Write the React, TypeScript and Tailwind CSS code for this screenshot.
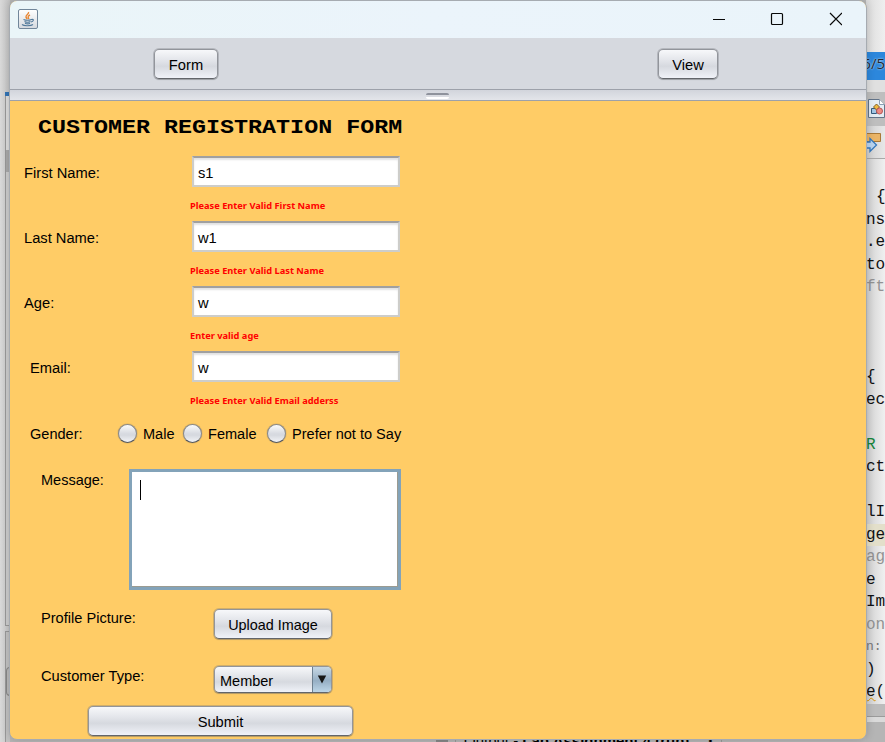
import type { ReactNode } from "react";

const codeLines = [
  { text: "{", pad: "pl-[10px]" },
  { text: "ns" },
  { text: ".e" },
  { text: "to" },
  { text: "ft", color: "text-[#929292]" },
  { text: "" },
  { text: "" },
  { text: "" },
  { text: "{" },
  { text: "ec" },
  { text: "" },
  { text: "R", color: "text-[#16853b]" },
  { text: "ct" },
  { text: "" },
  { text: "lI" },
  { text: "ge", bg: "bg-[#e3dfca]" },
  { text: "ag", color: "text-[#929292]" },
  { text: "e" },
  { text: "Im" },
  { text: "on", color: "text-[#929292]" },
  { text: "n:", color: "text-[#777777]", size: "text-[13px]" },
  { text: ")" },
  { text: "e(", warn: true },
];

function Editor() {
  return (
    <div className="flex h-[742px] w-[19px] shrink-0 flex-col overflow-hidden bg-gradient-to-r from-[#cfcfcf] to-[#f0f0f0]">
      <div className="h-[52px] shrink-0 bg-gradient-to-r from-[#dcdcdc] to-[#efefef]" />
      <div className="flex h-7 shrink-0 items-start justify-end bg-[#2c87dc] font-['Open_Sans',sans-serif] text-[15px] leading-[22px] text-[#202832] [text-shadow:0_0_2px_white]">
        6/5
      </div>
      <div className="h-3 shrink-0 bg-[#e0e0e0]" />
      <div className="h-[34px] shrink-0 bg-[#bebebe] pl-[2px] pt-[7px]">
        <svg width="17" height="19" viewBox="0 0 17 19">
          <path d="M.5.5h11l5 5v13H.5z" fill="#e5edf4" stroke="#637489" />
          <path d="M11.5.5v5h5" fill="#fff" stroke="#8ba0b5" />
          <path d="M3.500 9.500h5v5h-5z" fill="#a4c7e5" stroke="#315b7d" />
          <path d="m8.500 5 3 3-3 3-3-3z" fill="#efb93f" stroke="#80602a" />
          <circle cx="11.500" cy="12" r="3" fill="#ee8b83" stroke="#b95656" />
        </svg>
      </div>
      <div className="h-[33px] shrink-0 border-b border-[#a9a9a9] bg-gradient-to-r from-[#cecece] to-[#e8e8e8] pt-[6px]">
        <svg width="19" height="22" viewBox="0 0 19 22">
          <path d="M0 1.500h14.500v8H0z" fill="#eab466" stroke="#a97937" />
          <path d="M0 10h4V6.500l6.500 6.500-6.500 6.500V16H0z" fill="#b9d4f0" stroke="#3478bd" strokeWidth="1.300" />
        </svg>
      </div>
      <div className="h-[27px] shrink-0" />
      {codeLines.map((l, i) => (
        <div
          key={i}
          className={`h-[22.5px] shrink-0 whitespace-pre font-['Liberation_Mono',monospace] leading-[22.5px] ${l.size ?? "text-[16px]"} ${l.pad ?? ""} ${l.color ?? "text-[#111]"} ${l.bg ?? ""}`}
        >
          {l.warn ? (
            <>
              <span className="underline decoration-[#d99000] decoration-wavy decoration-1">e</span>(
            </>
          ) : (
            l.text
          )}
        </div>
      ))}
      <div className="h-[13px] shrink-0 border-b border-[#9b9b9b] bg-[#bcbcbc]" />
      <div className="h-[5px] shrink-0 bg-[#dadada]" />
      <div className="grow bg-[#b5b5b5]" />
    </div>
  );
}

function LeftPanels() {
  return (
    <div className="flex h-[742px] w-[10px] shrink-0 flex-col bg-gradient-to-r from-[#d9d9d9] to-[#c4c4c4] pl-[5px]">
      <div className="h-[92px] shrink-0" />
      <div className="h-1 shrink-0 bg-[#3374b5]" />
      <div className="h-[54px] shrink-0 border-l border-[#999] bg-[#dedede]" />
      <div className="h-[22px] shrink-0 border-l border-[#999] bg-[#aaa]" />
      <div className="h-[454px] shrink-0 border-b border-l border-[#999] bg-[#cecece]" />
      <div className="h-[5px] shrink-0" />
      <div className="grow border-l border-t border-[#999] bg-[#c3c3c3] pt-[35px]">
        <div className="h-[29px] rounded-l border border-[#888] bg-[#bbb]" />
      </div>
    </div>
  );
}

function Button({ children, className }: { children: ReactNode; className: string }) {
  return (
    <button
      className={`rounded-[5px] border border-[#92959b] border-b-[#62656a] bg-[linear-gradient(#f7f8fa_0%,#e4e6eb_35%,#d6d9df_58%,#f0f2f8_100%)] pt-px text-center shadow-[0_0_0_1px_rgba(105,108,116,0.3),0_1px_1px_0_rgba(80,80,80,0.25)] ${className}`}
    >
      {children}
    </button>
  );
}

function Radio({ label, className }: { label: string; className: string }) {
  return (
    <label className={`flex shrink-0 items-center gap-[6px] whitespace-nowrap ${className}`}>
      <span className="mb-px h-[19px] w-[19px] shrink-0 rounded-full border border-[#85888e] border-b-[#505660] bg-[linear-gradient(#fafbfc,#d8dbe1_50%,#d6d9df_60%,#f1f3f7)] shadow-[0_0_1px_#555]" />
      <span>{label}</span>
    </label>
  );
}

const fields = [
  { label: "First Name:", value: "s1", error: "Please Enter Valid First Name", pad: "pl-[14px]" },
  { label: "Last Name:", value: "w1", error: "Please Enter Valid Last Name", pad: "pl-[14px]" },
  { label: "Age:", value: "w", error: "Enter valid age", pad: "pl-[14px]" },
  { label: "Email:", value: "w", error: "Please Enter Valid Email adderss", pad: "pl-5" },
];

function Form() {
  return (
    <div className="flex h-[639px] w-[392px] flex-col">
      <h1 className="h-[55px] origin-left scale-x-[1.167] whitespace-pre pl-[24px] pt-[14px] font-['Liberation_Mono',monospace] text-[20px] font-bold leading-[26px]">
        CUSTOMER REGISTRATION FORM
      </h1>
      {fields.map((f) => (
        <div key={f.label} className="h-[65px]">
          <div className="flex h-[31px] items-center">
            <div className={`w-[182px] pt-[2px] ${f.pad}`}>{f.label}</div>
            <div className="flex h-[31px] w-[208px] items-center border-2 border-[#cdcdca] border-t-[#a0a0a0] bg-white pl-1 pt-[2px] shadow-[inset_0_2px_2px_#e2e2e2]">
              {f.value}
            </div>
          </div>
          <div className="pl-[180px] pt-3 font-['Noto_Sans',sans-serif] text-[9.25px] font-bold leading-[14px] text-[#ff0000]">
            {f.error}
          </div>
        </div>
      ))}
      <div className="flex h-[35px] items-center overflow-hidden pl-5 text-[14.55px]">
        <div className="w-[88px] shrink-0">Gender:</div>
        <Radio label="Male" className="w-[65px]" />
        <Radio label="Female" className="w-[84px]" />
        <Radio label="Prefer not to Say" className="w-[135px]" />
      </div>
      <div className="mt-[18px] flex h-[121px] pl-[31px]">
        <div className="w-[88px] pt-px text-[14.5px] leading-[21px]">Message:</div>
        <div className="w-[272px] border-[3px] border-[#83a3b9] bg-white pl-2 pt-2 shadow-[inset_-1px_-1px_0_#9b9b91]">
          <div className="h-5 w-px bg-black" />
        </div>
      </div>
      <div className="mt-[18px] flex h-[58px] items-start pl-[31px]">
        <div className="w-[173px] text-[14.6px] leading-5">Profile Picture:</div>
        <Button className="mt-px h-[30px] w-[118px] text-[14.4px]">Upload Image</Button>
      </div>
      <div className="flex h-[40px] items-start pl-[31px]">
        <div className="w-[173px] leading-5">Customer Type:</div>
        <div className="flex h-[27px] w-[118px] overflow-hidden rounded-[5px] border border-[#92959b] border-b-[#62656a] bg-[linear-gradient(#f7f8fa,#d6d9df_60%,#f0f2f8)] shadow-[0_0_0_1px_rgba(105,108,116,0.3),0_1px_1px_0_rgba(80,80,80,0.25)]">
          <div className="w-[97px] pl-[5px] text-[14.5px] leading-[28px]">Member</div>
          <div className="flex grow justify-center border-l border-[#6d8090] bg-[linear-gradient(#c7d8e5,#96afc4_55%,#bcd5e7)] pt-[8px]">
            <svg width="10" height="9" viewBox="0 0 10 9">
              <path d="M.8.500h8.400L5 8.500z" fill="#171717" />
            </svg>
          </div>
        </div>
      </div>
      <Button className="ml-[78px] h-[30px] w-[265px] shrink-0">Submit</Button>
    </div>
  );
}

export default function App() {
  return (
    <div className="relative h-[742px] w-[885px] overflow-hidden bg-[#b7b7b7] font-['Liberation_Sans',Arial,sans-serif] text-[14.7px] leading-5 text-black">
      <div className="flex h-[742px] justify-between">
        <LeftPanels />
        <div className="flex grow items-end overflow-hidden">
          <div className="ml-[426px] h-3 w-[12px] bg-[#888]" />
          <div className="-mb-2 ml-[7px] h-[18px] w-[267px] whitespace-nowrap border-x border-[#999] pl-2 text-[15px] leading-[18px]">
            Output - <b>Lab Assignment 4 (run)</b> ...×
          </div>
        </div>
        <Editor />
      </div>
      <div className="absolute left-[9px] top-0 flex h-[740px] w-[858px] flex-col overflow-hidden rounded-[8px] border border-[#a6abb1] bg-[#ffcc66] shadow-[0_0_8px_rgba(0,0,0,0.18)]">
        <header className="flex h-[37px] shrink-0 items-center bg-gradient-to-r from-[#eaf5f8] via-[#ebf4fb] to-[#eaf4fa]">
          <svg className="ml-2 mt-[-2px]" width="20" height="20" viewBox="0 0 20 20">
            <defs>
              <linearGradient id="tile" x2="0" y2="1">
                <stop stopColor="#fff" />
                <stop offset="1" stopColor="#d5d9de" />
              </linearGradient>
            </defs>
            <rect x=".5" y=".5" width="19" height="19" rx="1.500" fill="url(#tile)" stroke="#71869a" />
            <path d="M10.500 3c1 2-3 3-2.500 5 .2 1 1 1.200 1 2.200M12 6c-2 1-2.500 2-1 4" fill="none" stroke="#e88735" strokeWidth="1.400" />
            <path d="M5.500 10.500c2 .8 6 .8 8 0M6.500 12.500c1.500.8 4.500.8 6 0M7 14.300c1.500.6 4 .6 5 0M13.500 10.500c3-.7 2 2-.5 2.500M4 15.500c2 1.800 9 1.500 11 0" fill="none" stroke="#527a9b" strokeWidth="1.100" />
          </svg>
          <svg className="mb-[2px] ml-auto mr-6" width="130" height="14" viewBox="0 0 130 14" fill="none" stroke="#080808" strokeWidth="1.200">
            <path d="M1 7.500h12M118 1l12 12M130 1l-12 12" />
            <rect x="59.500" y="1.500" width="11" height="11" rx="1" />
          </svg>
        </header>
        <nav className="flex h-[51px] shrink-0 bg-[#d6d9df] pl-[144px] pt-[11px]">
          <Button className="h-[30px] w-[64px]">Form</Button>
          <Button className="ml-[440px] h-[30px] w-[60px]">View</Button>
        </nav>
        <div className="flex h-[12px] shrink-0 justify-center border-y border-[#9da1aa] bg-gradient-to-b from-[#d2d5dc] to-[#e3e5ea] pt-[3px]">
          <div className="mr-[2px] h-[6px] w-[23px] rounded-[2px] border-b-2 border-t-2 border-b-white border-t-[#8e929c] bg-[#d9dbe1]" />
        </div>
        <Form />
      </div>
    </div>
  );
}
